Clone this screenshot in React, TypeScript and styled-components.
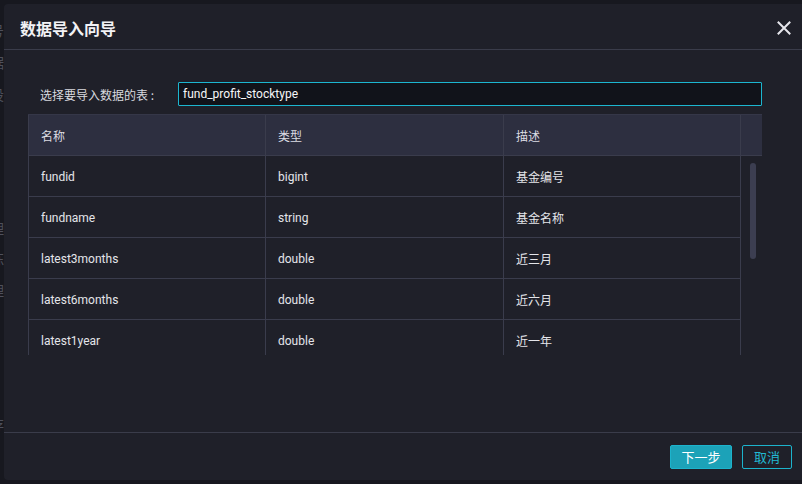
import React from "react";
import styled, { createGlobalStyle } from "styled-components";

const GlobalStyle = createGlobalStyle`
  html, body {
    margin: 0;
    padding: 0;
    background: #16171e;
    font-family: Roboto, "Noto Sans CJK SC", sans-serif;
    overflow: hidden;
  }
`;

const Page = styled.div`
  position: relative;
  width: 802px;
  height: 484px;
  overflow: hidden;
  background: #17181f;
`;

const SideGhost = styled.div`
  display: flex;
  flex-direction: column;
  margin-left: -10px;
  padding-top: 22px;
  width: 14px;
  color: #4e505c;
  font-size: 14px;
  line-height: 16px;
  font-family: "Noto Sans CJK SC", sans-serif;

  span {
    display: block;
    height: 16px;
  }
`;

const GhostGap = styled.div<{ h: number }>`
  height: ${(p) => p.h}px;
`;

const Modal = styled.div`
  position: absolute;
  left: 4px;
  top: 4px;
  width: 802px;
  height: 476px;
  background: #1f2029;
  border-radius: 4px;
  display: flex;
  flex-direction: column;
  color: #e4e5ea;
`;

const Header = styled.div`
  height: 45px;
  display: flex;
  align-items: center;
  justify-content: space-between;
  padding: 0 15px 0 16px;
  border-bottom: 1px solid #3a3c4a;
  flex-shrink: 0;
`;

const Title = styled.div`
  font-size: 16px;
  font-weight: 700;
  color: #f2f2f5;
  font-family: "Noto Sans CJK SC", sans-serif;
  padding-top: 2px;
`;

const CloseBtn = styled.div`
  width: 14px;
  height: 14px;
  display: flex;
  align-items: center;
  justify-content: center;
  padding-top: 2px;
`;

const Body = styled.div`
  flex: 1;
  padding: 32px 44px 0 24px;
`;

const FieldRow = styled.div`
  display: flex;
  align-items: center;
  height: 24px;
  padding-left: 12px;
`;

const Label = styled.div`
  width: 138px;
  font-size: 12px;
  color: #d8d9df;
  font-family: "Noto Sans CJK SC", sans-serif;
`;

const Input = styled.div`
  flex: 1;
  height: 24px;
  box-sizing: border-box;
  border: 1px solid #1cb6d0;
  background: #11131a;
  display: flex;
  align-items: center;
  padding-left: 4px;
  font-size: 12px;
  color: #f6f6f8;
  border-radius: 1px;
`;

const Table = styled.div`
  margin-top: 8px;
  width: 734px;
`;

const HeadRow = styled.div`
  display: grid;
  grid-template-columns: 237px 238px 238px 21px;
  height: 42px;
  background: #2d2f40;
  box-sizing: border-box;
  border-top: 1px solid #353748;
  border-bottom: 1px solid #3a3c4c;
`;

const Cell = styled.div<{ head?: boolean; last?: boolean }>`
  display: flex;
  align-items: center;
  padding-left: 12px;
  padding-top: 1px;
  font-size: 12px;
  color: ${(p) => (p.head ? "#dcdde3" : "#e4e5ea")};
  border-left: 1px solid #3a3c4c;
  border-right: ${(p) => (p.last ? "1px solid #3a3c4c" : "none")};
  font-family: Roboto, "Noto Sans CJK SC", sans-serif;
`;

const GutterHead = styled.div``;

const BodyWrap = styled.div`
  display: flex;
  height: 199px;
  overflow: hidden;
`;

const Rows = styled.div`
  width: 713px;
`;

const Row = styled.div`
  display: grid;
  grid-template-columns: 237px 238px 238px;
  height: 41px;
  box-sizing: border-box;
  border-bottom: 1px solid #3a3c4c;
`;

const Gutter = styled.div`
  width: 21px;
  display: flex;
  justify-content: center;
  padding-top: 7px;
  box-sizing: border-box;
`;

const Thumb = styled.div`
  width: 6px;
  height: 96px;
  border-radius: 3px;
  background: #3c3e51;
  margin-left: 2px;
`;

const Footer = styled.div`
  height: 47px;
  border-top: 1px solid #3a3c4a;
  display: flex;
  align-items: center;
  justify-content: flex-end;
  gap: 10px;
  padding-right: 14px;
  flex-shrink: 0;
`;

const Button = styled.button<{ primary?: boolean }>`
  height: 24px;
  box-sizing: border-box;
  padding: 0;
  width: ${(p) => (p.primary ? "62px" : "50px")};
  border-radius: 2px;
  font-size: 13px;
  font-family: "Noto Sans CJK SC", sans-serif;
  border: 1px solid #1cb3cc;
  background: ${(p) => (p.primary ? "#1ca2b8" : "transparent")};
  color: ${(p) => (p.primary ? "#ffffff" : "#22b9d2")};
`;

const columns = [
  { name: "fundid", type: "bigint", desc: "基金编号" },
  { name: "fundname", type: "string", desc: "基金名称" },
  { name: "latest3months", type: "double", desc: "近三月" },
  { name: "latest6months", type: "double", desc: "近六月" },
  { name: "latest1year", type: "double", desc: "近一年" },
  { name: "latest2years", type: "double", desc: "近两年" },
];

export default function App() {
  return (
    <Page>
      <GlobalStyle />
      <SideGhost>
        <span>号</span>
        <GhostGap h={16} />
        <span>据</span>
        <GhostGap h={16} />
        <span>设</span>
        <GhostGap h={118} />
        <span>理</span>
        <GhostGap h={14} />
        <span>练</span>
        <GhostGap h={16} />
        <span>理</span>
        <GhostGap h={118} />
        <span>存</span>
      </SideGhost>
      <Modal>
        <Header>
          <Title>数据导入向导</Title>
          <CloseBtn>
            <svg width="14" height="14" viewBox="0 0 14 14">
              <path
                d="M1.5 1.5 L12.5 12.5 M12.5 1.5 L1.5 12.5"
                stroke="#e6e6ec"
                strokeWidth="2"
                strokeLinecap="square"
              />
            </svg>
          </CloseBtn>
        </Header>
        <Body>
          <FieldRow>
            <Label>选择要导入数据的表 :</Label>
            <Input>fund_profit_stocktype</Input>
          </FieldRow>
          <Table>
            <HeadRow>
              <Cell head>名称</Cell>
              <Cell head>类型</Cell>
              <Cell head last>
                描述
              </Cell>
              <GutterHead />
            </HeadRow>
            <BodyWrap>
              <Rows>
                {columns.map((c) => (
                  <Row key={c.name}>
                    <Cell>{c.name}</Cell>
                    <Cell>{c.type}</Cell>
                    <Cell last>{c.desc}</Cell>
                  </Row>
                ))}
              </Rows>
              <Gutter>
                <Thumb />
              </Gutter>
            </BodyWrap>
          </Table>
        </Body>
        <Footer>
          <Button primary>下一步</Button>
          <Button>取消</Button>
        </Footer>
      </Modal>
    </Page>
  );
}
